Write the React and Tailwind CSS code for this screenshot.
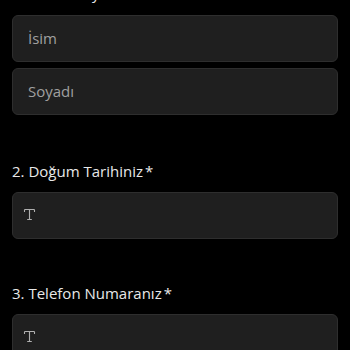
import { Type } from "lucide-react"

const Field = ({ placeholder, icon }) => (
  <div className="flex h-[47px] w-full items-center rounded-md border border-[#2e2e2e] bg-[#1f1f1f] px-[15px]">
    {icon ? (
      <Type className="-ml-[6px] mb-[3px] h-[15px] w-[15px] text-[#b0b0b0]" strokeWidth={1.8} />
    ) : (
      <span className="text-[15px] text-[#a0a0a0]">{placeholder}</span>
    )}
  </div>
)

const Label = ({ children, className = "mb-[9px]" }) => (
  <div className={`${className} text-[15px] leading-[24px] text-[#e8e8e8]`}>
    {children}
    <span className="ml-[2px]">*</span>
  </div>
)

export default function App() {
  return (
    <div className="h-[350px] w-[350px] overflow-hidden bg-black" style={{ fontFamily: '"Open Sans", sans-serif' }}>
      <div className="-mt-[19px] px-3">
        <section>
          <Label className="mb-[10px]">1. Adınız Soyadınız</Label>
          <div className="flex flex-col gap-[6px]">
            <Field placeholder="İsim" />
            <Field placeholder="Soyadı" />
          </div>
        </section>

        <section className="mt-[44px]">
          <Label>2. Doğum Tarihiniz</Label>
          <Field icon />
        </section>

        <section className="mt-[42px]">
          <Label>3. Telefon Numaranız</Label>
          <Field icon />
        </section>
      </div>
    </div>
  )
}
